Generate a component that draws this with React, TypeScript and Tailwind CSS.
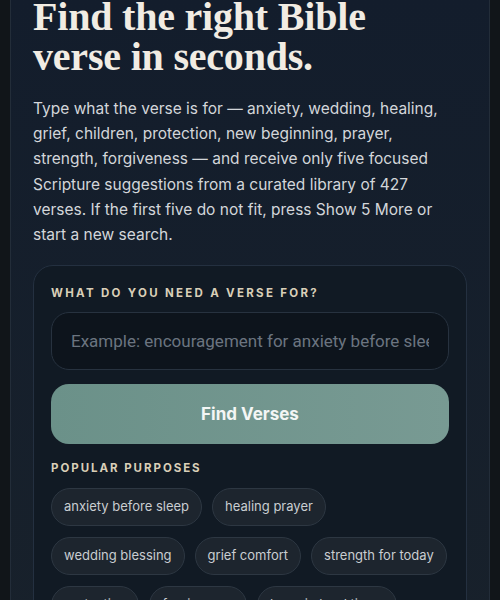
import React, { useState } from 'react';

const purposes = [
  'anxiety before sleep',
  'healing prayer',
  'wedding blessing',
  'grief comfort',
  'strength for today',
  'protection',
  'forgiveness',
  'hope in hard times',
];

const App: React.FC = () => {
  const [query, setQuery] = useState('');

  return (
    <div className="min-h-[600px] bg-[#111519] px-[10px] font-['Inter',sans-serif]">
      <div className="min-h-[600px] border-x border-[#232d39] bg-gradient-to-b from-[#131d2c] to-[#18212b] px-[22px]">
        <h1 className="-mt-[3px] font-['Liberation_Serif',serif] text-[40px] font-bold leading-[40px] tracking-[-0.2px] text-[#f1ece3]">
          Find the right Bible
          <br />
          verse in seconds.
        </h1>
        <p className="mt-[19px] max-w-[410px] text-[15.5px] leading-[25.2px] text-[#d3d6da]">
          Type what the verse is for — anxiety, wedding, healing, grief, children, protection, new beginning, prayer,
          strength, forgiveness — and receive only five focused Scripture suggestions from a curated library of 427
          verses. If the first five do not fit, press Show 5 More or start a new search.
        </p>

        <div className="mt-[18px] rounded-[20px] border border-[#243040] bg-[#111a24] px-[17px] pt-[19px] pb-6">
          <label className="block text-[11.5px] font-bold uppercase tracking-[0.2em] text-[#d9cfb8]">
            What do you need a verse for?
          </label>
          <input
            value={query}
            onChange={(e) => setQuery(e.target.value)}
            placeholder="Example: encouragement for anxiety before sleep"
            className="mt-[10px] h-[58px] w-full rounded-[18px] border border-[#27323f] bg-[#0d141c] px-[19px] font-['Roboto',sans-serif] text-[17px] text-[#e6e8ea] placeholder:text-[#6b7480] outline-none"
          />
          <button className="mt-[14px] h-[60px] w-full rounded-[18px] bg-gradient-to-r from-[#6b9189] to-[#789a93] text-[17px] font-bold text-[#f4f6f5]">
            Find Verses
          </button>

          <div className="mt-[16px] text-[11.5px] font-bold uppercase tracking-[0.17em] text-[#d9cfb8]">
            Popular purposes
          </div>
          <div className="mt-[10px] flex flex-wrap gap-x-[10px] gap-y-[11px]">
            {purposes.map((p) => (
              <button
                key={p}
                onClick={() => setQuery(p)}
                className="h-[38px] rounded-full border border-[#2d3742] bg-[#1d252e] px-[12px] text-[13px] text-[#c9cdd1]"
              >
                {p}
              </button>
            ))}
          </div>
        </div>
      </div>
    </div>
  );
};

export default App;
